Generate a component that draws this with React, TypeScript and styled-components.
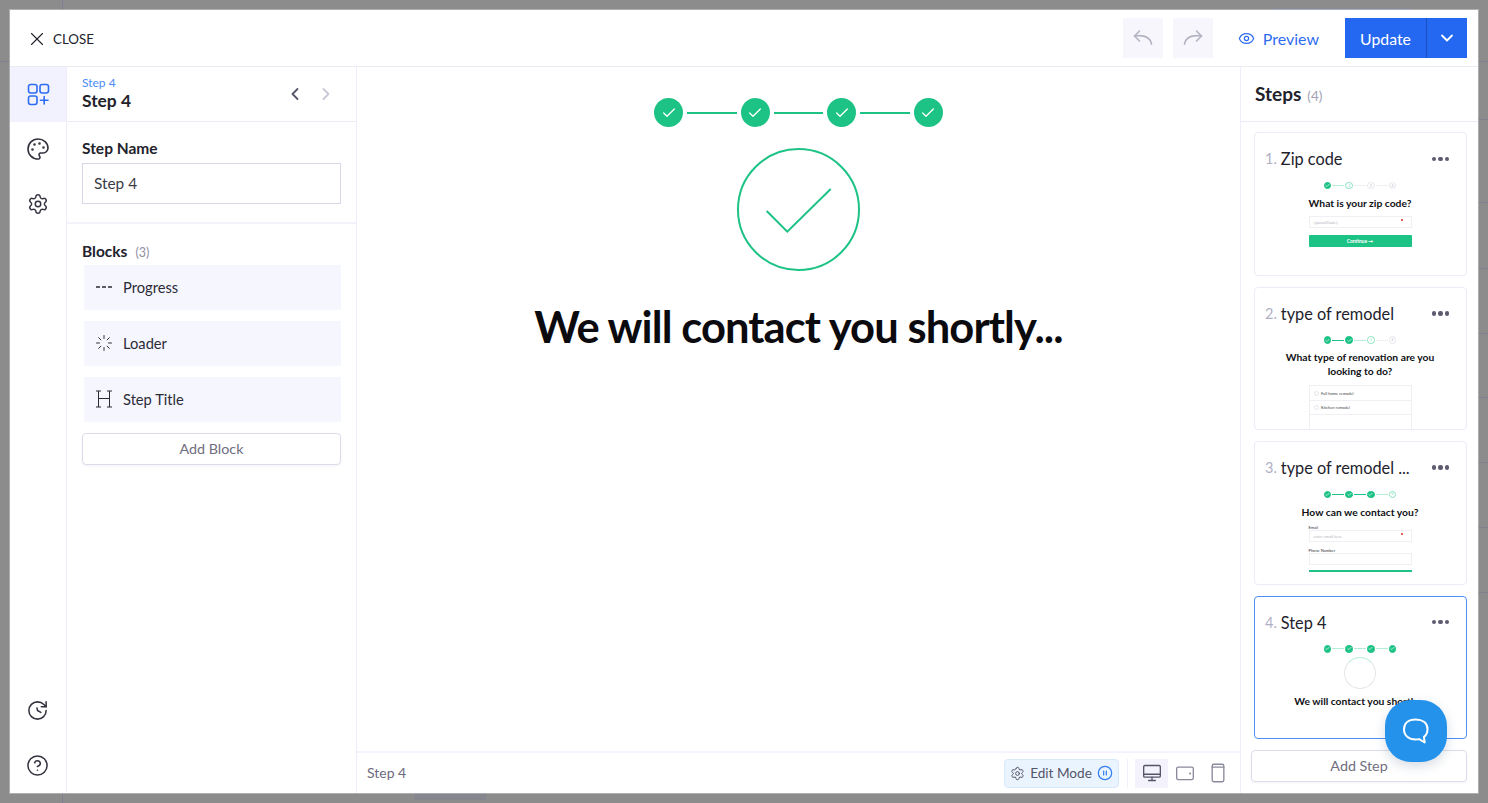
import React, { FC } from 'react';
import styled, { createGlobalStyle } from 'styled-components';
import {
  Check,
  ChevronDown,
  ChevronLeft,
  ChevronRight,
  CircleHelp,
  CirclePause,
  Eye,
  Loader,
  Palette,
  Settings,
  X,
} from 'lucide-react';

const GlobalStyle = createGlobalStyle`
  html, body {
    height: 100%;
    margin: 0;
  }
  body {
    background-color: #8c8c8c;
    font-family: Lato, 'Open Sans', sans-serif;
    overflow: hidden;
  }
  * {
    box-sizing: border-box;
  }
`;

const backdropLines = [61, 119, 202, 268, 333, 397, 462, 527, 592]
  .map((y) => `linear-gradient(#7f8090, #7f8090) right 0 top ${y}px / 10px 1px no-repeat`)
  .join(',');

const Page = styled.div`
  background:
    ${backdropLines},
    linear-gradient(#7f8090, #7f8090) 0 61px / 10px 1px no-repeat,
    linear-gradient(#7f7f96, #7f7f96) 62px 0 / 1px 10px no-repeat,
    linear-gradient(#7f7f96, #7f7f96) 62px 793px / 1px 10px no-repeat,
    linear-gradient(#7f8aa8, #7f8aa8) 1272px 9px / 139px 1px no-repeat,
    linear-gradient(#86868f, #86868f) 414px 793px / 72px 7px no-repeat;
  height: 803px;
  padding: 10px;
  position: relative;
  width: 1488px;
`;

const Modal = styled.div`
  background: #fff;
  box-shadow: 0 0 0 1px rgba(255, 255, 255, 0.3);
  display: flex;
  flex-direction: column;
  height: 783px;
  width: 1468px;
`;

const TopBar = styled.header`
  align-items: center;
  border-bottom: 1px solid #ebeaf4;
  display: flex;
  flex: none;
  height: 57px;
  padding: 0 11px 0 16px;
`;

const CloseButton = styled.div`
  align-items: center;
  color: #22222c;
  display: flex;
  font-size: 13.4px;
  gap: 5px;
  padding-top: 2px;
`;

const TopActions = styled.div`
  align-items: center;
  display: flex;
  margin-left: auto;
`;

const HistoryButton = styled.div`
  align-items: center;
  background: #f6f6fc;
  color: #b4b3c2;
  display: flex;
  height: 40px;
  justify-content: center;
  margin-right: 10px;
  width: 40px;
`;

const PreviewLink = styled.div`
  align-items: center;
  color: #2f6df0;
  display: flex;
  font-size: 16px;
  gap: 8px;
  margin: 0 26px 0 15px;
`;

const UpdateGroup = styled.div`
  background: #2468f2;
  color: #fff;
  display: flex;
  height: 40px;
  width: 122px;
`;

const UpdateLabel = styled.div`
  align-items: center;
  border-right: 1px solid #1a4fc0;
  display: flex;
  font-size: 15.8px;
  justify-content: center;
  width: 82px;
`;

const UpdateCaret = styled.div`
  align-items: center;
  display: flex;
  flex: 1;
  justify-content: center;
`;

const Body = styled.div`
  display: flex;
  flex: 1;
  min-height: 0;
`;

const Rail = styled.nav`
  border-right: 1px solid #eeedfb;
  color: #33333f;
  display: flex;
  flex: none;
  flex-direction: column;
  width: 57px;
`;

const RailItem = styled.div<{ $active?: boolean; $pinned?: boolean }>`
  align-items: center;
  background: ${(props) => (props.$active ? '#f1f2fd' : 'transparent')};
  color: ${(props) => (props.$active ? '#2f6df0' : 'inherit')};
  display: flex;
  flex: none;
  height: 55px;
  justify-content: center;
  padding: 0 1px ${(props) => (props.$pinned ? '0' : '2px')} 0;
`;

const RailSpacer = styled.div`
  flex: 1;
`;

const EditorPanel = styled.aside`
  border-right: 1px solid #eeedfb;
  display: flex;
  flex: none;
  flex-direction: column;
  width: 290px;
`;

const PanelHeader = styled.div`
  align-items: center;
  border-bottom: 1px solid #ebeaf6;
  display: flex;
  flex: none;
  height: 55px;
  padding: 0 15px;
`;

const Breadcrumb = styled.div`
  color: #4a8bf5;
  font-size: 12px;
  line-height: 14px;
`;

const PanelTitle = styled.div`
  color: #22222c;
  font-size: 17.4px;
  font-weight: 700;
  line-height: 22px;
`;

const PagerButtons = styled.div`
  align-items: center;
  display: flex;
  gap: 11px;
  margin-left: auto;
  margin-right: 5px;
`;

const PagerButton = styled.div<{ $disabled?: boolean }>`
  color: ${(props) => (props.$disabled ? '#c9c8d8' : '#55556a')};
  display: flex;
`;

const NameSection = styled.section`
  border-bottom: 2px solid #f4f3fb;
  flex: none;
  height: 102px;
  padding: 16px 15px 0;
`;

const FieldLabel = styled.div`
  color: #22222c;
  font-size: 15.5px;
  font-weight: 700;
  line-height: 20px;
`;

const NameInput = styled.div`
  align-items: center;
  border: 1px solid #d8d7ea;
  color: #3b3b47;
  display: flex;
  font-size: 15.4px;
  height: 41px;
  margin-top: 5px;
  padding: 0 0 2px 11px;
`;

const BlocksSection = styled.section`
  padding: 17px 15px 0;
`;

const SectionHeading = styled.div`
  align-items: baseline;
  display: flex;
  gap: 8px;
  margin-bottom: 4px;
`;

const Count = styled.span`
  color: #8f8ea3;
  font-size: 12.5px;
`;

const BlockRow = styled.div`
  align-items: center;
  background: #f6f6fe;
  color: #2b2b38;
  display: flex;
  font-size: 14.7px;
  gap: 10px;
  height: 45px;
  margin: 0 0 11px 2px;
  padding: 0 0 1px 11px;
`;

const BlockIcon = styled.div`
  display: flex;
  justify-content: center;
  width: 18px;
`;

const OutlineButton = styled.div`
  align-items: center;
  border: 1px solid #dddcec;
  border-radius: 4px;
  box-shadow: 0 1px 2px rgba(90, 90, 140, 0.08);
  color: #6f6e80;
  display: flex;
  font-size: 14.3px;
  height: 32px;
  justify-content: center;
  padding-bottom: 2px;
`;

const Canvas = styled.main`
  border-right: 1px solid #eeedfb;
  display: flex;
  flex: 1;
  flex-direction: column;
  min-width: 0;
`;

const CanvasContent = styled.div`
  align-items: center;
  display: flex;
  flex: 1;
  flex-direction: column;
  padding-top: 31px;
`;

const ProgressRow = styled.div`
  align-items: center;
  display: flex;
`;

const ProgressDot = styled.div`
  align-items: center;
  background: #1dc285;
  border-radius: 50%;
  color: #fff;
  display: flex;
  height: 29px;
  justify-content: center;
  width: 29px;
`;

const ProgressLine = styled.div`
  background: #1dc285;
  height: 2px;
  margin: 0 4px;
  width: 49.67px;
`;

const SuccessMark = styled.svg`
  display: block;
  margin-top: 21px;
`;

const Headline = styled.h1`
  color: #0b0b0f;
  font-size: 43.5px;
  font-weight: 700;
  letter-spacing: -0.9px;
  line-height: 56px;
  margin: 27px 0 0;
`;

const CanvasFooter = styled.footer`
  align-items: center;
  border-top: 2px solid #f4f3fd;
  color: #6b6a7e;
  display: flex;
  flex: none;
  font-size: 14px;
  height: 42px;
  padding: 0 6px 0 10px;
`;

const FooterLabel = styled.span`
  margin-bottom: 2px;
`;

const EditModeBadge = styled.div`
  align-items: center;
  background: #eaf4fe;
  border: 1px solid #d8e9fb;
  border-radius: 4px;
  color: #55556a;
  display: flex;
  font-size: 13.6px;
  gap: 5px;
  height: 29px;
  justify-content: center;
  margin-left: auto;
  white-space: nowrap;
  width: 115px;
`;

const DeviceGroup = styled.div`
  border-left: 1px solid #f1f0fa;
  display: flex;
  margin-left: 8px;
  padding-left: 7px;
`;

const DeviceButton = styled.div<{ $active?: boolean }>`
  align-items: center;
  background: ${(props) => (props.$active ? '#f3f2fd' : 'transparent')};
  color: ${(props) => (props.$active ? '#55556a' : '#8a899c')};
  display: flex;
  height: 29px;
  justify-content: center;
  width: 33px;
`;

const StepsPanel = styled.aside`
  display: flex;
  flex: none;
  flex-direction: column;
  position: relative;
  width: 237px;
`;

const StepsHeader = styled.div`
  align-items: baseline;
  border-bottom: 1px solid #ebeaf6;
  color: #22222c;
  display: flex;
  flex: none;
  font-size: 19px;
  font-weight: 700;
  gap: 6px;
  height: 55px;
  padding: 15px 14px 0;
`;

const StepsCount = styled.span`
  color: #a3a2b5;
  font-size: 13.5px;
  font-weight: 400;
`;

const StepList = styled.div`
  display: flex;
  flex: 1;
  flex-direction: column;
  gap: 11px;
  padding: 10.4px 11px 0 13px;
`;

const StepCard = styled.div<{ $selected?: boolean }>`
  border: 1px solid ${(props) => (props.$selected ? '#4a90f5' : '#ecebfa')};
  border-radius: 4px;
  flex: none;
  height: 143.4px;
  overflow: hidden;
  padding: 14.5px 17px 0 10px;
`;

const StepCardHead = styled.div`
  align-items: center;
  color: #22222c;
  display: flex;
  font-size: 16.3px;
  height: 22px;
  white-space: nowrap;
`;

const StepNumber = styled.span`
  color: #b0afc4;
  font-size: 14.5px;
  margin-right: 4px;
`;

const MoreDots = styled.div`
  color: #5c5b70;
  display: flex;
  gap: 2px;
  margin-left: auto;
`;

const MoreDot = styled.span`
  background: currentColor;
  border-radius: 50%;
  height: 4.5px;
  width: 4.5px;
`;

const Thumb = styled.div`
  align-items: center;
  display: flex;
  flex-direction: column;
  margin: 12px -6px 0 0;
`;

const MiniSteps = styled.div`
  align-items: center;
  display: flex;
  margin-bottom: 7.5px;
`;

const MiniDot = styled.div<{ $state: 'done' | 'current' | 'todo' }>`
  align-items: center;
  background: ${(props) => (props.$state === 'done' ? '#1dc285' : '#fff')};
  border: 1px solid
    ${(props) =>
      props.$state === 'done' ? '#1dc285' : props.$state === 'current' ? '#8ae3c1' : '#e6e6ec'};
  border-radius: 50%;
  color: ${(props) => (props.$state === 'done' ? '#fff' : props.$state === 'current' ? '#8ae3c1' : '#b5b5bd')};
  display: flex;
  font-size: 3.5px;
  height: 7.5px;
  justify-content: center;
  width: 7.5px;
`;

const MiniLine = styled.div<{ $tone: 'strong' | 'soft' | 'faint' }>`
  background: ${(props) =>
    props.$tone === 'strong' ? '#1dc285' : props.$tone === 'soft' ? '#b4ecd6' : '#efeff2'};
  height: 1px;
  margin: 0 1px;
  width: 12.2px;
`;

const MiniTitle = styled.div`
  color: #101015;
  font-size: 10.3px;
  font-weight: 700;
  line-height: 13.5px;
  text-align: center;
  width: 156px;
`;

const MiniForm = styled.div`
  display: flex;
  flex-direction: column;
  width: 103px;
`;

const MiniLabel = styled.div`
  color: #333;
  font-size: 4px;
  line-height: 5px;
`;

const MiniInput = styled.div`
  align-items: center;
  border: 1px solid #f0f0f4;
  color: #b5b5bd;
  display: flex;
  font-size: 4px;
  height: 12px;
  padding-left: 4px;
  position: relative;
`;

const RequiredMark = styled.span`
  background: #e0413b;
  border-radius: 50%;
  height: 1.5px;
  position: absolute;
  right: 8px;
  top: 2px;
  width: 1.5px;
`;

const MiniButton = styled.div`
  align-items: center;
  background: #1dc285;
  border-radius: 1px;
  color: #fff;
  display: flex;
  font-size: 5px;
  font-weight: 700;
  gap: 3px;
  height: 12px;
  justify-content: center;
  margin-top: 7px;
`;

const MiniOption = styled.div`
  align-items: center;
  border: 1px solid #f0f0f4;
  border-bottom-width: 0;
  color: #444;
  display: flex;
  font-size: 4px;
  gap: 2.5px;
  height: 14.5px;
  padding-left: 4px;
`;

const MiniRadio = styled.span`
  border: 1px solid #e6e6ec;
  border-radius: 50%;
  height: 5px;
  width: 5px;
`;

const MiniBar = styled.div`
  background: #1dc285;
  height: 2px;
  margin-top: 5px;
`;

const MiniCircle = styled.div`
  border: 1px solid #e4e8e6;
  border-top-color: #b4ecd6;
  border-radius: 50%;
  flex: none;
  height: 32px;
  margin: -3.5px 0 6px;
  width: 32px;
`;

const AddStepWrap = styled.div`
  flex: none;
  padding: 11px 11px 11px 10px;
`;

const ChatBubble = styled.div`
  align-items: center;
  background: #2491eb;
  border-radius: 26px;
  bottom: 31px;
  box-shadow: 0 4px 12px rgba(30, 60, 100, 0.18);
  color: #fff;
  display: flex;
  height: 62px;
  justify-content: center;
  position: absolute;
  right: 31px;
  width: 62px;
`;

const Icon: FC<{ size?: number; children: React.ReactNode; fill?: string }> = ({ size = 24, children, fill = 'none' }) => (
  <svg width={size} height={size} viewBox="0 0 24 24" fill={fill} stroke="currentColor" strokeWidth={1.6} strokeLinecap="round" strokeLinejoin="round">
    {children}
  </svg>
);

const BlocksIcon = () => (
  <Icon>
    <rect x="2.5" y="2.5" width="8.5" height="8.5" rx="2.2" />
    <rect x="14" y="2.5" width="8.5" height="8.5" rx="2.2" />
    <rect x="2.5" y="14" width="8.5" height="8.5" rx="2.2" />
    <path d="M18.2 14.5v7.5M14.5 18.2H22" />
  </Icon>
);

const UndoIcon = () => (
  <Icon>
    <path d="M8.5 5 3.5 10l5 5" />
    <path d="M3.5 10C11 9 19 10 20.5 18" />
  </Icon>
);

const RedoIcon = () => (
  <Icon>
    <path d="M15.5 5l5 5-5 5" />
    <path d="M20.5 10C13 9 5 10 3.5 18" />
  </Icon>
);

const ClockRedoIcon = () => (
  <Icon size={23}>
    <path d="M21 12a9 9 0 1 1-9-9c2.52 0 4.93 1 6.74 2.74L21 8" />
    <path d="M21 3v5h-5" />
    <path d="M11.5 9.5 12 12l3.5 2" />
  </Icon>
);

const DashesIcon = () => (
  <svg width="18" height="4" viewBox="0 0 18 4" stroke="#2b2b38" strokeWidth="1.3">
    <path d="M1 2h4M7 2h4M13 2h4" />
  </svg>
);

const HeadingIcon = () => (
  <svg width="18" height="18" viewBox="0 0 18 18" fill="none" stroke="#2b2b38" strokeWidth="1">
    <path d="M3.5 1v16M14.5 1v16M3.5 8.5h11M1 1h5M12 1h5M1 17h5M12 17h5" />
  </svg>
);

const MonitorIcon = () => (
  <Icon size={20}>
    <rect x="2" y="3" width="20" height="14" rx="1.5" />
    <path d="M2 13.5h20M12 17v3.5M8 21h8" />
  </Icon>
);

const TabletIcon = () => (
  <Icon size={20}>
    <rect x="2" y="5" width="20" height="15" rx="2" />
    <path d="M18 12.5h.1" strokeWidth={2.4} />
  </Icon>
);

const PhoneIcon = () => (
  <Icon size={20}>
    <rect x="5" y="1.5" width="14" height="21" rx="2" />
    <path d="M5 5h14" />
  </Icon>
);

const BubbleIcon = () => (
  <svg width="28" height="28" viewBox="0 0 28 28" fill="none" stroke="currentColor" strokeWidth="2" strokeLinejoin="round">
    <path d="M13.5 2.5c6.8 0 12 3.2 12 9.6 0 3.6-1.4 6.4-3.6 7.8l.8 5.6-5.6-3.4c-1.2.3-2.4.4-3.6.4C6.8 22.5 2 18.6 2 12.2 2 5.8 6.8 2.5 13.5 2.5Z" />
  </svg>
);

type MiniState = 'done' | 'current' | 'todo';

const MiniProgress: FC<{ states: MiniState[]; soft?: boolean }> = ({ states, soft }) => (
  <MiniSteps>
    {states.map((state, idx) => (
      <React.Fragment key={idx}>
        {idx > 0 && (
          <MiniLine
            $tone={
              state === 'todo' ? 'faint' : state === 'current' ? 'soft' : soft ? 'soft' : 'strong'
            }
          />
        )}
        <MiniDot $state={state}>
          {state === 'done' ? <Check size={5} strokeWidth={3} /> : idx + 1}
        </MiniDot>
      </React.Fragment>
    ))}
  </MiniSteps>
);

const StepPreview: FC<{
  index: number;
  name: string;
  selected?: boolean;
  children: React.ReactNode;
}> = ({ index, name, selected, children }) => (
  <StepCard $selected={selected}>
    <StepCardHead>
      <StepNumber>{index}.</StepNumber>
      {name}
      <MoreDots>
        <MoreDot />
        <MoreDot />
        <MoreDot />
      </MoreDots>
    </StepCardHead>
    <Thumb>{children}</Thumb>
  </StepCard>
);

const App: FC = () => (
  <Page>
    <GlobalStyle />
    <Modal>
      <TopBar>
        <CloseButton>
          <X size={22} strokeWidth={1.2} />
          CLOSE
        </CloseButton>
        <TopActions>
          <HistoryButton>
            <UndoIcon />
          </HistoryButton>
          <HistoryButton>
            <RedoIcon />
          </HistoryButton>
          <PreviewLink>
            <Eye size={17} strokeWidth={1.8} />
            Preview
          </PreviewLink>
          <UpdateGroup>
            <UpdateLabel>Update</UpdateLabel>
            <UpdateCaret>
              <ChevronDown size={20} strokeWidth={2.2} />
            </UpdateCaret>
          </UpdateGroup>
        </TopActions>
      </TopBar>

      <Body>
        <Rail>
          <RailItem $active>
            <BlocksIcon />
          </RailItem>
          <RailItem>
            <Palette size={24} strokeWidth={1.6} />
          </RailItem>
          <RailItem>
            <Settings size={22} strokeWidth={1.6} />
          </RailItem>
          <RailSpacer />
          <RailItem $pinned>
            <ClockRedoIcon />
          </RailItem>
          <RailItem $pinned>
            <CircleHelp size={23} strokeWidth={1.6} />
          </RailItem>
        </Rail>

        <EditorPanel>
          <PanelHeader>
            <div>
              <Breadcrumb>Step 4</Breadcrumb>
              <PanelTitle>Step 4</PanelTitle>
            </div>
            <PagerButtons>
              <PagerButton>
                <ChevronLeft size={20} strokeWidth={2.2} />
              </PagerButton>
              <PagerButton $disabled>
                <ChevronRight size={20} strokeWidth={2.2} />
              </PagerButton>
            </PagerButtons>
          </PanelHeader>

          <NameSection>
            <FieldLabel>Step Name</FieldLabel>
            <NameInput>Step 4</NameInput>
          </NameSection>

          <BlocksSection>
            <SectionHeading>
              <FieldLabel>Blocks</FieldLabel>
              <Count>(3)</Count>
            </SectionHeading>
            <BlockRow>
              <BlockIcon>
                <DashesIcon />
              </BlockIcon>
              Progress
            </BlockRow>
            <BlockRow>
              <BlockIcon>
                <Loader size={18} strokeWidth={1.3} />
              </BlockIcon>
              Loader
            </BlockRow>
            <BlockRow>
              <BlockIcon>
                <HeadingIcon />
              </BlockIcon>
              Step Title
            </BlockRow>
            <OutlineButton>Add Block</OutlineButton>
          </BlocksSection>
        </EditorPanel>

        <Canvas>
          <CanvasContent>
            <ProgressRow>
              {[0, 1, 2, 3].map((idx) => (
                <React.Fragment key={idx}>
                  {idx > 0 && <ProgressLine />}
                  <ProgressDot>
                    <Check size={16} strokeWidth={2} />
                  </ProgressDot>
                </React.Fragment>
              ))}
            </ProgressRow>
            <SuccessMark width="123" height="123" viewBox="0 0 123 123" fill="none" stroke="#1dc285" strokeWidth="2">
              <circle cx="61.5" cy="61.5" r="60.5" />
              <path d="M29.7 63 50.3 83.7 93.7 41" />
            </SuccessMark>
            <Headline>We will contact you shortly...</Headline>
          </CanvasContent>
          <CanvasFooter>
            <FooterLabel>Step 4</FooterLabel>
            <EditModeBadge>
              <Settings size={15} strokeWidth={1.6} />
              Edit Mode
              <CirclePause size={16} strokeWidth={1.8} color="#2f7df0" />
            </EditModeBadge>
            <DeviceGroup>
              <DeviceButton $active>
                <MonitorIcon />
              </DeviceButton>
              <DeviceButton>
                <TabletIcon />
              </DeviceButton>
              <DeviceButton>
                <PhoneIcon />
              </DeviceButton>
            </DeviceGroup>
          </CanvasFooter>
        </Canvas>

        <StepsPanel>
          <StepsHeader>
            Steps <StepsCount>(4)</StepsCount>
          </StepsHeader>
          <StepList>
            <StepPreview index={1} name="Zip code">
              <MiniProgress states={['done', 'current', 'todo', 'todo']} />
              <MiniTitle>What is your zip code?</MiniTitle>
              <MiniForm>
                <MiniInput style={{ marginTop: 6 }}>
                  [[postalCode]]
                  <RequiredMark />
                </MiniInput>
                <MiniButton>Continue →</MiniButton>
              </MiniForm>
            </StepPreview>
            <StepPreview index={2} name="type of remodel">
              <MiniProgress states={['done', 'done', 'current', 'todo']} />
              <MiniTitle>What type of renovation are you looking to do?</MiniTitle>
              <MiniForm style={{ marginTop: 7 }}>
                <MiniOption>
                  <MiniRadio />
                  Full home remodel
                </MiniOption>
                <MiniOption>
                  <MiniRadio />
                  Kitchen remodel
                </MiniOption>
                <MiniOption />
              </MiniForm>
            </StepPreview>
            <StepPreview index={3} name="type of remodel ...">
              <MiniProgress states={['done', 'done', 'done', 'current']} />
              <MiniTitle>How can we contact you?</MiniTitle>
              <MiniForm style={{ marginTop: 6 }}>
                <MiniLabel>Email</MiniLabel>
                <MiniInput>
                  enter email here
                  <RequiredMark />
                </MiniInput>
                <MiniLabel style={{ marginTop: 6 }}>Phone Number</MiniLabel>
                <MiniInput />
                <MiniBar />
              </MiniForm>
            </StepPreview>
            <StepPreview index={4} name="Step 4" selected>
              <MiniProgress states={['done', 'done', 'done', 'done']} soft />
              <MiniCircle />
              <MiniTitle>We will contact you shortly...</MiniTitle>
            </StepPreview>
          </StepList>
          <AddStepWrap>
            <OutlineButton>Add Step</OutlineButton>
          </AddStepWrap>
          <ChatBubble>
            <BubbleIcon />
          </ChatBubble>
        </StepsPanel>
      </Body>
    </Modal>
  </Page>
);

export default App;
